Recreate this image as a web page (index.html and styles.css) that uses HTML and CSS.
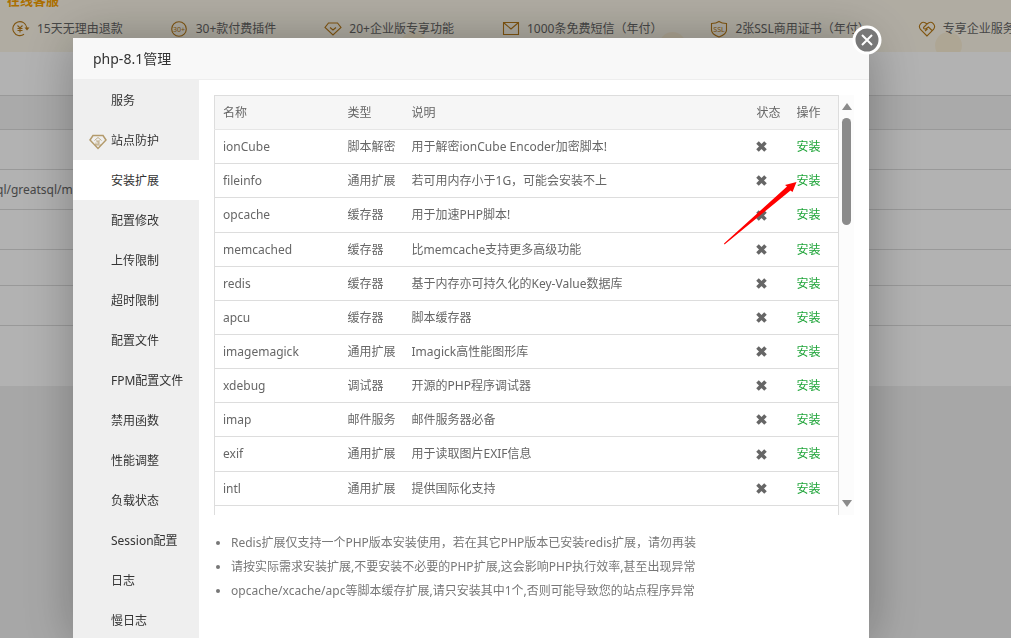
FILE: index.html
```html
<!DOCTYPE html>
<html lang="zh-CN">
<head>
<meta charset="utf-8">
<title>php-8.1管理</title>
<link rel="stylesheet" href="styles.css">
</head>
<body>
<svg class="defs" aria-hidden="true">
  <symbol id="cross" viewBox="0 0 11 11"><path d="M1.500 1.500 9.500 9.500M9.500 1.500 1.500 9.500" fill="none" stroke="currentColor" stroke-width="3.600"/></symbol>
</svg>

<main class="page">
  <section class="banner">
    <a class="service" href="#">在线客服</a>
    <i class="dot dot-a"></i><i class="dot dot-b"></i><i class="dot dot-c"></i>
    <ul class="perks">
      <li><svg viewBox="0 0 18 18"><path d="M12 14.300A7 7 0 1 1 14.800 7.500v1M5.500 5.500 8 8l2.500-2.500M8 8v4.500M5.500 8.500h5M5.500 10.500h5"/><path d="M12.500 7.500h5L15 10.500Z" fill="#b87a18" stroke="none"/></svg>15天无理由退款</li>
      <li><svg viewBox="0 0 18 18"><circle cx="8" cy="9" r="7.300"/><text x="8" y="11.500" text-anchor="middle">30+</text></svg>30+款付费插件</li>
      <li><svg viewBox="0 0 18 18"><path d="M4.500 3h9L17 7.500 9 15 1 7.500ZM6 7.500 9 10l3-2.500"/></svg>20+企业版专享功能</li>
      <li><svg viewBox="0 0 18 18"><path d="M1.500 2.500h15v12h-15ZM2 3 9 9l7-6"/></svg>1000条免费短信（年付）</li>
      <li><svg viewBox="0 0 18 18"><path d="M9 1.500C7 3 4.500 3.500 1.500 3.500V10c0 3.500 3.500 5.500 7.500 7 4-1.500 7.500-3.500 7.500-7V3.500c-3 0-5.500-.5-7.500-2Z"/><text x="9" y="11.500" text-anchor="middle">SSL</text></svg>2张SSL商用证书（年付）</li>
      <li><svg viewBox="0 0 18 18"><path d="M9 16 2.500 9.500C-.5 5.500 4-.5 9 4c5-4.500 9.500 1.500 6.500 5.500ZM9 4 5.500 7.500c0 2 2 2 3.500.5l1.500-1 3.500 3.500M7 11l2.500-2"/></svg>专享企业服务</li>
    </ul>
  </section>
  <table class="software">
    <tr><th></th></tr>
    <tr><td></td></tr>
    <tr><td><span class="clip">ql/greatsql/m</span></td></tr>
    <tr><td></td></tr>
    <tr class="short"><td></td></tr>
    <tr><td></td></tr>
    <tr class="last"><td></td></tr>
  </table>
</main>

<div class="shade">
  <section class="dialog" role="dialog" aria-labelledby="title">
    <h1 class="title" id="title">php-8.1管理</h1>
    <button class="close" aria-label="关闭"><svg viewBox="0 0 30 30"><circle cx="15" cy="15" r="13" fill="#787878" stroke="#fff" stroke-width="3"/><path d="m10 10 10 10M20 10 10 20" stroke="#fff" stroke-width="2"/></svg></button>
    <div class="body">
      <nav class="menu">
        <button>服务</button>
        <button><svg class="gem" viewBox="0 0 18 16"><path d="M4 1.500h10L17 6 9 14.500 1 6Z" stroke-width="1.500"/><path d="M5.500 6.500 9 3.500l3.500 3M7 7h4M9 7v4M7 8.500V11M6 11h6M9 9h2" stroke-width=".8"/></svg>站点防护</button>
        <button class="active">安装扩展</button>
        <button>配置修改</button>
        <button>上传限制</button>
        <button>超时限制</button>
        <button>配置文件</button>
        <button>FPM配置文件</button>
        <button>禁用函数</button>
        <button>性能调整</button>
        <button>负载状态</button>
        <button>Session配置</button>
        <button>日志</button>
        <button>慢日志</button>
      </nav>
      <div class="content">
        <div class="viewport">
          <table class="ext">
            <colgroup><col class="c-name"><col class="c-type"><col><col class="c-state"><col class="c-op"></colgroup>
            <thead><tr><th>名称</th><th>类型</th><th>说明</th><th>状态</th><th>操作</th></tr></thead>
            <tbody>
              <tr><td>ionCube</td><td>脚本解密</td><td>用于解密ionCube Encoder加密脚本!</td><td><svg class="x"><use href="#cross"/></svg></td><td><a href="#">安装</a></td></tr>
              <tr><td>fileinfo</td><td>通用扩展</td><td>若可用内存小于1G，可能会安装不上</td><td><svg class="x"><use href="#cross"/></svg></td><td><a href="#">安装</a></td></tr>
              <tr><td>opcache</td><td>缓存器</td><td>用于加速PHP脚本!</td><td><svg class="x"><use href="#cross"/></svg></td><td><a href="#">安装</a></td></tr>
              <tr><td>memcached</td><td>缓存器</td><td>比memcache支持更多高级功能</td><td><svg class="x"><use href="#cross"/></svg></td><td><a href="#">安装</a></td></tr>
              <tr><td>redis</td><td>缓存器</td><td>基于内存亦可持久化的Key-Value数据库</td><td><svg class="x"><use href="#cross"/></svg></td><td><a href="#">安装</a></td></tr>
              <tr><td>apcu</td><td>缓存器</td><td>脚本缓存器</td><td><svg class="x"><use href="#cross"/></svg></td><td><a href="#">安装</a></td></tr>
              <tr><td>imagemagick</td><td>通用扩展</td><td>Imagick高性能图形库</td><td><svg class="x"><use href="#cross"/></svg></td><td><a href="#">安装</a></td></tr>
              <tr><td>xdebug</td><td>调试器</td><td>开源的PHP程序调试器</td><td><svg class="x"><use href="#cross"/></svg></td><td><a href="#">安装</a></td></tr>
              <tr><td>imap</td><td>邮件服务</td><td>邮件服务器必备</td><td><svg class="x"><use href="#cross"/></svg></td><td><a href="#">安装</a></td></tr>
              <tr><td>exif</td><td>通用扩展</td><td>用于读取图片EXIF信息</td><td><svg class="x"><use href="#cross"/></svg></td><td><a href="#">安装</a></td></tr>
              <tr><td>intl</td><td>通用扩展</td><td>提供国际化支持</td><td><svg class="x"><use href="#cross"/></svg></td><td><a href="#">安装</a></td></tr>
              <tr><td></td><td></td><td></td><td></td><td></td></tr>
            </tbody>
          </table>
          <div class="bar" aria-hidden="true"><i class="up"></i><i class="thumb"></i><i class="down"></i></div>
          <svg class="pointer" viewBox="0 0 74 64"><path d="M1 61.500 64 4.500 62 3 73.500 0 69.500 10 67.500 8.500 1.500 62.500Z" fill="#f00"/></svg>
        </div>
        <ul class="notes">
          <li>Redis扩展仅支持一个PHP版本安装使用，若在其它PHP版本已安装redis扩展，请勿再装</li>
          <li>请按实际需求安装扩展,不要安装不必要的PHP扩展,这会影响PHP执行效率,甚至出现异常</li>
          <li>opcache/xcache/apc等脚本缓存扩展,请只安装其中1个,否则可能导致您的站点程序异常</li>
        </ul>
      </div>
    </div>
  </section>
</div>
</body>
</html>
```

FILE: styles.css
```css
* { box-sizing: border-box; }

body {
  margin: 0;
  height: 100vh;
  overflow: hidden;
  background: #f0f0f0;
  color: #666;
  font: 12px/20px "Noto Sans", "Noto Sans CJK SC", sans-serif;
}

ul { margin: 0; padding: 0; }
a { text-decoration: none; }
button { border: 0; padding: 0; background: none; font: inherit; color: inherit; cursor: pointer; }
table { border-collapse: collapse; width: 100%; }
.defs { position: absolute; width: 0; height: 0; }

/* Page behind the dialog */
.page { overflow: hidden; }

.banner {
  position: relative;
  height: 52px;
  padding: 0 7px;
  overflow: hidden;
  background: #fcf7e9;
}

.service {
  display: block;
  height: 19px;
  color: #f5a000;
  font-size: 13px;
  font-weight: bold;
  line-height: 0;
}

.perks {
  position: relative;
  display: flex;
  gap: 48px;
  padding-left: 5px;
  list-style: none;
  white-space: nowrap;
}
.perks li { display: flex; flex: none; align-items: center; gap: 7px; }
.perks svg { width: 18px; height: 18px; fill: none; stroke: #b87a18; stroke-width: 1.1; }
.perks text { fill: #b87a18; stroke: none; font-size: 7px; }

.dot { position: absolute; top: 32px; width: 27px; height: 27px; border-radius: 50%; background: #faeed5; }
.dot-a { left: 400px; }
.dot-b { left: 659px; }
.dot-c { left: 935px; }

.software { margin-top: 43px; background: #fff; box-shadow: 0 -43px #fff; }
.software th { height: 34px; background: #f4f4f4; border: solid #dcdcdc; border-width: 1px 0; padding: 0; }
.software td { height: 40px; padding: 0; border-bottom: 1px solid #dcdcdc; }
.software .short td { height: 36px; }
.software .last td { height: 60px; border: 0; }
.clip { margin-left: -4px; }

/* Dialog */
.shade {
  position: fixed;
  inset: 0;
  padding: 38px 142px 0 73px;
  overflow: hidden;
  background: rgba(0, 0, 0, .3);
}

.dialog {
  position: relative;
  background: #fff;
  box-shadow: 1px 1px 50px rgba(0, 0, 0, .3);
}

.title {
  margin: 0;
  padding: 0 20px;
  border-bottom: 1px solid #eee;
  background: #f8f8f8;
  color: #333;
  font-size: 14px;
  font-weight: normal;
  line-height: 41px;
}

.close { position: absolute; top: -13px; right: -13px; width: 30px; height: 30px; }
.close svg { display: block; }

.body { display: flex; }

.menu {
  display: flex;
  flex: none;
  flex-direction: column;
  width: 126px;
  background: #efefef;
  color: #333;
}
.menu button { position: relative; height: 40px; padding: 2px 0 0 38px; text-align: left; }
.menu .active { background: #fff; }
.gem { position: absolute; left: 16px; top: 14px; width: 18px; height: 16px; fill: none; stroke: #b39a6b; }

.content { flex: 1; min-width: 0; padding: 15px; }

.viewport { position: relative; display: flex; height: 420px; overflow: hidden; }

.ext { flex: 1; align-self: flex-start; table-layout: fixed; width: auto; border: 1px solid #ddd; }
.ext th, .ext td { height: 34px; padding: 0 8px; border-bottom: 1px solid #ddd; text-align: left; white-space: nowrap; }
.ext th { background: #f6f6f6; border-color: #e6e6e6; font-weight: normal; }
.ext tbody tr:nth-child(7n+3) td { height: 35px; }
.ext a { color: #20a53a; }
.c-name { width: 125px; }
.c-type { width: 64px; }
.c-state { width: 40px; }
.c-op { width: 50px; }
.x { display: block; width: 11px; height: 11px; }

.bar {
  display: flex;
  flex: none;
  flex-direction: column;
  align-items: center;
  width: 15px;
  padding: 8px 0;
  background: #fcfcfc;
}
.up, .down { border: solid transparent; border-width: 0 5px; }
.up { border-bottom: 7px solid #8b8b8b; }
.down { margin-top: auto; border-top: 7px solid #8b8b8b; }
.thumb { width: 9px; height: 107px; margin-top: 8px; border-radius: 5px; background: #8b8b8b; }

.pointer { position: absolute; top: 87px; right: 57px; width: 74px; height: 64px; }

.notes { padding: 16px 0 24px 17px; color: #777; line-height: 24px; }
```
